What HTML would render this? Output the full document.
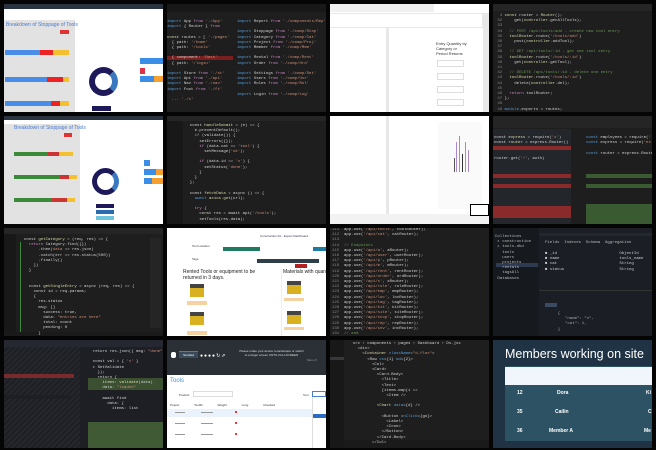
<!DOCTYPE html>
<html><head><meta charset="utf-8"><style>
*{margin:0;padding:0;box-sizing:border-box}
body{width:656px;height:450px;background:#050505;position:relative;overflow:hidden;font-family:"Liberation Sans",sans-serif}
.t{position:absolute;width:159px;height:108px;overflow:hidden}
.a{position:absolute}
.code{font-family:"Liberation Mono",monospace;font-size:4px;line-height:5.2px;white-space:pre;color:#9cdcfe}
.k{color:#c586c0}.s{color:#ce9178}.f{color:#dcdcaa}.g{color:#6a9955}.w{color:#d4d4d4}.b{color:#569cd6}.n{color:#858585}
</style></head><body>

<!-- Tile 1 -->
<div class="t" style="left:4px;top:4px;background:#fff">
 <div class="a" style="left:0;top:0;width:159px;height:5px;background:#2a3440"></div>
 <div class="a" style="left:0;top:16px;width:71px;height:92px;background:#e2e2e2"></div>
 <div class="a" style="left:2px;top:18px;font-size:5px;color:#4a7bd1">Breakdown of Stoppage of Tools</div>
 <div class="a" style="left:56px;top:26px;width:9px;height:4px;background:#d33"></div>
 <div class="a" style="left:1px;top:46px;width:35px;height:5px;background:#4a8de8"></div><div class="a" style="left:36px;top:46px;width:13px;height:5px;background:#e22"></div><div class="a" style="left:49px;top:46px;width:16px;height:5px;background:#f5c030"></div>
 <div class="a" style="left:1px;top:73px;width:42px;height:5px;background:#4a8de8"></div><div class="a" style="left:43px;top:73px;width:16px;height:5px;background:#e22"></div><div class="a" style="left:59px;top:73px;width:6px;height:5px;background:#f5c030"></div>
 <div class="a" style="left:1px;top:97px;width:46px;height:5px;background:#4a8de8"></div><div class="a" style="left:47px;top:97px;width:9px;height:5px;background:#e22"></div><div class="a" style="left:56px;top:97px;width:9px;height:5px;background:#f5c030"></div>
 <div class="a" style="left:85px;top:63px;width:29px;height:29px;border-radius:50%;border:6px solid #1e1a5a;border-right-color:#3a79c0"></div>
 <div class="a" style="left:88px;top:102px;width:19px;height:5px;background:#1e1a5a"></div>
 <div class="a" style="left:136px;top:54px;width:23px;height:6px;background:#3a8ee8"></div>
 <div class="a" style="left:136px;top:64px;width:5px;height:6px;background:#d34"></div>
 <div class="a" style="left:136px;top:72px;width:23px;height:6px;background:#f5a030"></div><div class="a" style="left:136px;top:72px;width:14px;height:6px;background:#3a8ee8"></div>
</div>

<!-- Tile 2 -->
<div class="t" style="left:167px;top:4px;background:#1e1e1e">
 <div class="a" style="left:0;top:0;width:159px;height:8px;background:#181818"></div>
 <div class="a" style="left:0;top:52px;width:66px;height:4px;background:#7a1f1f"></div>
 <div class="a code" style="left:0;top:16px"><span class="b">import</span> <span class="w">App</span> <span class="k">from</span> <span class="s">'./App'</span>
<span class="b">import</span> <span class="w">{ Router }</span> <span class="k">from</span>

<span class="f">const</span> <span class="w">routes = [</span> <span class="s">'./pages'</span>
<span class="w">  { path:</span> <span class="s">'/home'</span>
<span class="w">  { path:</span> <span class="s">'/tools'</span>

<span class="w">  { component:</span> <span class="s">'Dash'</span>
<span class="w">  { path:</span> <span class="s">'/login'</span>

<span class="b">import</span> <span class="w">Store</span> <span class="k">from</span> <span class="s">'./st'</span>
<span class="b">import</span> <span class="w">Api</span> <span class="k">from</span> <span class="s">'./api'</span>
<span class="b">import</span> <span class="w">Nav</span> <span class="k">from</span> <span class="s">'./nav'</span>
<span class="b">import</span> <span class="w">Foot</span> <span class="k">from</span> <span class="s">'./ft'</span>

<span class="w">  ...</span> <span class="s">'./x'</span></div>
 <div class="a code" style="left:70px;top:16px"><span class="b">import</span> <span class="w">Report</span> <span class="k">from</span> <span class="s">'./components/Rep'</span>

<span class="b">import</span> <span class="w">Stoppage</span> <span class="k">from</span> <span class="s">'./comp/Stop'</span>
<span class="b">import</span> <span class="w">Category</span> <span class="k">from</span> <span class="s">'./comp/Cat'</span>
<span class="b">import</span> <span class="w">Project</span> <span class="k">from</span> <span class="s">'./comp/Proj'</span>
<span class="b">import</span> <span class="w">Member</span> <span class="k">from</span> <span class="s">'./comp/Mem'</span>

<span class="b">import</span> <span class="w">Rental</span> <span class="k">from</span> <span class="s">'./comp/Rent'</span>
<span class="b">import</span> <span class="w">Order</span> <span class="k">from</span> <span class="s">'./comp/Ord'</span>

<span class="b">import</span> <span class="w">Settings</span> <span class="k">from</span> <span class="s">'./comp/Set'</span>
<span class="b">import</span> <span class="w">Users</span> <span class="k">from</span> <span class="s">'./comp/Usr'</span>
<span class="b">import</span> <span class="w">Roles</span> <span class="k">from</span> <span class="s">'./comp/Rol'</span>

<span class="b">import</span> <span class="w">Login</span> <span class="k">from</span> <span class="s">'./comp/Log'</span></div>
</div>

<!-- Tile 3 -->
<div class="t" style="left:330px;top:4px;background:#fff">
 <div class="a" style="left:0;top:0;width:104px;height:8px;background:#f0f0f0"></div>
 <div class="a" style="left:0;top:9px;width:159px;height:15px;background:#e8e8e8"></div>
 <div class="a" style="left:0;top:10px;width:152px;height:13px;background:#fff"></div>
 <div class="a" style="left:56px;top:24px;width:3px;height:84px;background:#e8e8e8"></div>
 <div class="a" style="left:153px;top:24px;width:6px;height:84px;background:#e8e8e8"></div>
 <div class="a" style="left:106px;top:37px;font-size:4px;line-height:5px;width:32px;color:#333">Entry Quantity by Category or Period Returns</div>
 <div class="a" style="left:107px;top:56px;width:27px;height:7px;border:1px solid #ddd"></div>
 <div class="a" style="left:107px;top:69px;width:27px;height:7px;border:1px solid #ddd"></div>
 <div class="a" style="left:107px;top:82px;width:27px;height:7px;border:1px solid #ddd"></div>
 <div class="a" style="left:107px;top:95px;width:27px;height:7px;border:1px solid #ddd"></div>
</div>

<!-- Tile 4 -->
<div class="t" style="left:493px;top:4px;background:#1e1e1e">
 <div class="a" style="left:0;top:0;width:159px;height:7px;background:#252526"></div>
 <div class="a code" style="left:2px;top:10px"><span class="n">  4</span> <span class="f">const</span> <span class="w">router = </span><span class="f">Router</span><span class="w">();</span>
<span class="n"> 32</span>     <span class="w">get(</span><span class="f">controller</span><span class="w">.getAllTools);</span>
<span class="n"> 33</span>
<span class="n"> 34</span>   <span class="g">// POST /api/tools/add - create new tool entry</span>
<span class="n"> 35</span>   <span class="f">toolRouter</span><span class="w">.route(</span><span class="s">'/tools/add'</span><span class="w">)</span>
<span class="n"> 36</span>     <span class="w">post(</span><span class="f">controller</span><span class="w">.addTool);</span>
<span class="n"> 37</span>
<span class="n"> 38</span>   <span class="g">// GET /api/tools/:id - get one tool entry</span>
<span class="n"> 39</span>   <span class="f">toolRouter</span><span class="w">.route(</span><span class="s">'/tools/:id'</span><span class="w">)</span>
<span class="n"> 40</span>     <span class="w">get(</span><span class="f">controller</span><span class="w">.getTool);</span>
<span class="n"> 41</span>
<span class="n"> 42</span>   <span class="g">// DELETE /api/tools/:id - delete one entry</span>
<span class="n"> 43</span>   <span class="f">toolRouter</span><span class="w">.route(</span><span class="s">'/tools/:id'</span><span class="w">)</span>
<span class="n"> 44</span>     <span class="w">delete(</span><span class="f">controller</span><span class="w">.del);</span>
<span class="n"> 45</span>
<span class="n"> 46</span>   <span class="k">return</span> <span class="w">toolRouter;</span>
<span class="n"> 47</span> <span class="w">};</span>
<span class="n"> 48</span>
<span class="n"> 49</span> <span class="b">module</span><span class="w">.exports = routes;</span></div>
</div>

<!-- Tile 5 -->
<div class="t" style="left:4px;top:116px;background:#fff">
 <div class="a" style="left:0;top:0;width:159px;height:4px;background:#2a3440"></div>
 <div class="a" style="left:0;top:8px;width:76px;height:100px;background:#e2e2e2"></div>
 <div class="a" style="left:10px;top:9px;font-size:5px;color:#4a7bd1">Breakdown of Stoppage of Tools</div>
 <div class="a" style="left:60px;top:17px;width:8px;height:4px;background:#d33"></div>
 <div class="a" style="left:10px;top:36px;width:34px;height:4px;background:#3a8a3a"></div><div class="a" style="left:44px;top:36px;width:11px;height:4px;background:#c33"></div><div class="a" style="left:55px;top:36px;width:14px;height:4px;background:#f5c030"></div>
 <div class="a" style="left:10px;top:59px;width:46px;height:4px;background:#3a8a3a"></div><div class="a" style="left:56px;top:59px;width:9px;height:4px;background:#c33"></div><div class="a" style="left:65px;top:59px;width:8px;height:4px;background:#f5c030"></div>
 <div class="a" style="left:10px;top:82px;width:38px;height:4px;background:#3a8a3a"></div><div class="a" style="left:48px;top:82px;width:15px;height:4px;background:#c33"></div><div class="a" style="left:63px;top:82px;width:8px;height:4px;background:#f5c030"></div>
 <div class="a" style="left:88px;top:52px;width:27px;height:27px;border-radius:50%;border:5px solid #1e1a5a;border-right-color:#3a79c0"></div>
 <div class="a" style="left:92px;top:88px;width:18px;height:4px;background:#1e1a5a"></div>
 <div class="a" style="left:92px;top:94px;width:18px;height:4px;background:#2a6cb0"></div>
 <div class="a" style="left:92px;top:100px;width:18px;height:4px;background:#6cc5dd"></div>
 <div class="a" style="left:140px;top:44px;width:6px;height:6px;background:#3a8ee8"></div>
 <div class="a" style="left:140px;top:53px;width:19px;height:6px;background:#f5a030"></div><div class="a" style="left:140px;top:53px;width:12px;height:6px;background:#3a8ee8"></div>
 <div class="a" style="left:140px;top:62px;width:19px;height:6px;background:#f5a030"></div><div class="a" style="left:140px;top:62px;width:8px;height:6px;background:#3a8ee8"></div>
</div>

<!-- Tile 6 -->
<div class="t" style="left:167px;top:116px;background:#1e1e1e">
 <div class="a" style="left:0;top:0;width:159px;height:5px;background:#252526"></div>
 <div class="a" style="left:0;top:5px;width:16px;height:103px;background:#181818"></div>
 <div class="a code" style="left:18px;top:8px"><span class="w">  const</span> <span class="f">handleSubmit</span> <span class="w">= (e) => {</span>
<span class="w">    e.preventDefault();</span>
<span class="k">    if</span> <span class="w">(validate()) {</span>
<span class="w">      setErrors({});</span>
<span class="k">      if</span> <span class="w">(data.cat ==</span> <span class="s">'tool'</span><span class="w">) {</span>
<span class="w">        setMessage(</span><span class="s">'ok'</span><span class="w">);</span>

<span class="k">      if</span> <span class="w">(data.id ==</span> <span class="s">'x'</span><span class="w">) {</span>
<span class="w">        setStatus(</span><span class="s">'done'</span><span class="w">);</span>
<span class="w">      }</span>
<span class="w">    }</span>
<span class="w">  };</span>

<span class="w">  const</span> <span class="f">fetchData</span> <span class="w">= async () => {</span>
<span class="w">    </span><span class="b">await</span> <span class="f">axios.get</span><span class="w">(url);</span>

<span class="w">    </span><span class="k">try</span> <span class="w">{</span>
<span class="w">      const res = await api(</span><span class="s">'/tools'</span><span class="w">);</span>
<span class="w">      setTools(res.data);</span>

<span class="w">    } </span><span class="k">catch</span><span class="w"> {</span>
<span class="w">    }</span>
<span class="w">  };</span></div>
</div>

<!-- Tile 7 -->
<div class="t" style="left:330px;top:116px;background:#fff">
 <div class="a" style="left:56px;top:0;width:3px;height:108px;background:#e8e8e8"></div>
 <div class="a" style="left:0;top:98px;width:159px;height:10px;background:#f2f2f2"></div>
 <div class="a" style="left:108px;top:6px;width:44px;height:87px;background:#fafafa"></div>
 <div class="a" style="left:124px;top:42px;width:1px;height:14px;background:#555"></div>
 <div class="a" style="left:126px;top:26px;width:1px;height:30px;background:#aa88cc"></div>
 <div class="a" style="left:129px;top:20px;width:1px;height:36px;background:#aa88cc"></div>
 <div class="a" style="left:132px;top:38px;width:1px;height:18px;background:#333"></div>
 <div class="a" style="left:135px;top:26px;width:1px;height:30px;background:#aa88cc"></div>
 <div class="a" style="left:138px;top:34px;width:1px;height:22px;background:#aa88cc"></div>
 <div class="a" style="left:140px;top:88px;width:19px;height:12px;border:1px solid #000;background:#fff"></div>
</div>

<!-- Tile 8 -->
<div class="t" style="left:493px;top:116px;background:#1e1e1e">
 <div class="a" style="left:0;top:0;width:159px;height:12px;background:#252526"></div>
 <div class="a" style="left:0;top:13px;width:78px;height:95px;background:#23262b"></div>
 <div class="a" style="left:0;top:30px;width:78px;height:4px;background:#8a2a2a"></div>
 <div class="a" style="left:0;top:58px;width:78px;height:4px;background:#8a2a2a"></div>
 <div class="a" style="left:0;top:68px;width:78px;height:4px;background:#8a2a2a"></div>
 <div class="a" style="left:0;top:90px;width:78px;height:12px;background:#8a2a2a"></div>
 <div class="a" style="left:93px;top:58px;width:66px;height:4px;background:#3a5a32"></div>
 <div class="a" style="left:93px;top:68px;width:66px;height:4px;background:#3a5a32"></div>
 <div class="a" style="left:93px;top:88px;width:66px;height:20px;background:#3a5a32"></div>
 <div class="a code" style="left:1px;top:20px"><span class="w">const</span> <span class="f">express</span> <span class="w">= require(</span><span class="s">'x'</span><span class="w">)</span>
<span class="w">const</span> <span class="f">router</span> <span class="w">= express.Router()</span>


<span class="w">router.get(</span><span class="s">'/'</span><span class="w">, auth)</span></div>
 <div class="a code" style="left:93px;top:20px"><span class="b">const</span> <span class="w">employees = require(</span><span class="s">'./e'</span><span class="w">)</span>
<span class="b">const</span> <span class="w">express = require(</span><span class="s">'ex'</span><span class="w">)</span>

<span class="b">const</span> <span class="w">router = express.Router()</span></div>
</div>

<!-- Tile 9 -->
<div class="t" style="left:4px;top:228px;background:#1e1e1e">
 <div class="a" style="left:0;top:0;width:159px;height:6px;background:#252526"></div>
 <div class="a" style="left:0;top:6px;width:12px;height:102px;background:#181818"></div>
 <div class="a" style="left:16px;top:14px;width:1px;height:90px;background:#3a8a3a"></div>
 <div class="a" style="left:146px;top:10px;width:11px;height:90px;background:#252526"></div>
 <div class="a" style="left:0;top:104px;width:159px;height:4px;background:#1a1a1a"></div>
 <div class="a code" style="left:20px;top:10px"><span class="w">const</span> <span class="f">getCategory</span> <span class="w">= (req, res) => {</span>
<span class="k">  return</span> <span class="w">Category.find({})</span>
<span class="w">      .then(</span><span class="s">data</span><span class="w"> => res.json)</span>
<span class="w">      .catch(err => res.status(500))</span>
<span class="w">      .finally()</span>
<span class="w">    })</span>
<span class="w">  }</span>


<span class="w">  const</span> <span class="f">getSingleEntry</span> <span class="w">= async (req, res) => {</span>
<span class="w">    const id = req.params;</span>
<span class="w">    {</span>
<span class="w">      res.status</span>
<span class="w">      msg: []</span>
<span class="w">        success: true,</span>
<span class="w">        data:</span> <span class="s">"entries are here"</span>
<span class="w">        total: count</span>
<span class="w">        pending: 0</span>
<span class="w">      }</span>

<span class="w">    }) .</span><span class="f">catch</span><span class="w">(err)</span></div>
</div>

<!-- Tile 10 -->
<div class="t" style="left:167px;top:228px;background:#fff">
 <div class="a" style="left:93px;top:6px;font-size:3px;color:#335">Construction Kit - Expert Dashboard</div>
 <div class="a" style="left:25px;top:16px;font-size:3px;color:#333">Tool Location</div>
 <div class="a" style="left:56px;top:19px;width:37px;height:4px;background:#1f7a5e"></div>
 <div class="a" style="left:146px;top:19px;width:13px;height:4px;background:#1f7aa0"></div>
 <div class="a" style="left:25px;top:29px;font-size:3px;color:#333">Tags</div>
 <div class="a" style="left:90px;top:31px;width:62px;height:4px;background:#2e3f4a"></div>
 <div class="a" style="left:128px;top:36px;width:12px;height:4px;background:#b52020"></div>
 <div class="a" style="left:16px;top:41px;font-size:5px;line-height:6px;width:90px;color:#222">Rented Tools or equipment to be returned in 3 days.</div>
 <div class="a" style="left:114px;top:41px;width:1px;height:67px;background:#eee"></div>
 <div class="a" style="left:116px;top:41px;font-size:5px;color:#222;white-space:nowrap">Materials with quantity le</div>
 <div class="a" style="left:23px;top:56px;width:14px;height:13px;background:#d8b020;border-top:4px solid #444"></div>
 <div class="a" style="left:20px;top:73px;width:20px;height:4px;background:#f5d2a0"></div>
 <div class="a" style="left:23px;top:84px;width:14px;height:13px;background:#d8b020;border-top:4px solid #444"></div>
 <div class="a" style="left:20px;top:103px;width:20px;height:4px;background:#f5d2a0"></div>
 <div class="a" style="left:120px;top:53px;width:14px;height:13px;background:#d8b020;border-top:4px solid #444"></div>
 <div class="a" style="left:117px;top:70px;width:20px;height:3px;background:#f5d2a0"></div>
 <div class="a" style="left:120px;top:83px;width:14px;height:13px;background:#d8b020;border-top:4px solid #444"></div>
 <div class="a" style="left:117px;top:99px;width:20px;height:3px;background:#f5d2a0"></div>
</div>

<!-- Tile 11 -->
<div class="t" style="left:330px;top:228px;background:#1e1e1e">
 <div class="a code" style="left:2px;top:0"><span class="n">111</span>  <span class="w">app.use(</span><span class="s">'/api/tools'</span><span class="w">, toolRouter);</span>
<span class="n">112</span>  <span class="w">app.use(</span><span class="s">'/api/cat'</span><span class="w">, catRouter);</span>
<span class="n">113</span>
<span class="n">114</span>  <span class="g">// Endpoints</span>
<span class="n">115</span>  <span class="w">app.use(</span><span class="s">'/api/a'</span><span class="w">, aRouter);</span>
<span class="n">116</span>  <span class="w">app.use(</span><span class="s">'/api/user'</span><span class="w">, userRouter);</span>
<span class="n">117</span>  <span class="w">app.use(</span><span class="s">'/api/p'</span><span class="w">, pRouter);</span>
<span class="n">118</span>  <span class="w">app.use(</span><span class="s">'/api/m'</span><span class="w">, mRouter);</span>
<span class="n">119</span>  <span class="w">app.use(</span><span class="s">'/api/rent'</span><span class="w">, rentRouter);</span>
<span class="n">120</span>  <span class="w">app.use(</span><span class="s">'/api/order'</span><span class="w">, ordRouter);</span>
<span class="n">121</span>  <span class="w">app.use(</span><span class="s">'/api/s'</span><span class="w">, sRouter);</span>
<span class="n">122</span>  <span class="w">app.use(</span><span class="s">'/api/role'</span><span class="w">, roleRouter);</span>
<span class="n">123</span>  <span class="w">app.use(</span><span class="s">'/api/emp'</span><span class="w">, empRouter);</span>
<span class="n">124</span>  <span class="w">app.use(</span><span class="s">'/api/loc'</span><span class="w">, locRouter);</span>
<span class="n">125</span>  <span class="w">app.use(</span><span class="s">'/api/tag'</span><span class="w">, tagRouter);</span>
<span class="n">126</span>  <span class="w">app.use(</span><span class="s">'/api/kit'</span><span class="w">, kitRouter);</span>
<span class="n">127</span>  <span class="w">app.use(</span><span class="s">'/api/site'</span><span class="w">, siteRouter);</span>
<span class="n">128</span>  <span class="w">app.use(</span><span class="s">'/api/stop'</span><span class="w">, stopRouter);</span>
<span class="n">129</span>  <span class="w">app.use(</span><span class="s">'/api/rep'</span><span class="w">, repRouter);</span>
<span class="n">130</span>  <span class="w">app.use(</span><span class="s">'/api/inv'</span><span class="w">, invRouter);</span>
<span class="n">131</span>  <span class="g">// end</span></div>
</div>

<!-- Tile 12 -->
<div class="t" style="left:493px;top:228px;background:#1b1e24">
 <div class="a" style="left:0;top:0;width:46px;height:108px;background:#16191e"></div>
 <div class="a" style="left:3px;top:35px;width:42px;height:4px;background:#2e3b50"></div>
 <div class="a code" style="left:2px;top:7px;color:#bbb">Collections
 ▸ construction
 ▸ tools-dbd
   tools
   users
   projects
   rentals
   tagsAll
 Databases</div>
 <div class="a" style="left:46px;top:5px;width:113px;height:3px;background:#23272e"></div>
 <div class="a code" style="left:52px;top:13px;color:#bbb">Fields  Indexes  Schema  Aggregation</div>
 <div class="a code" style="left:52px;top:24px;color:#ccc">■ _id                          ObjectId
■ name                         tools_name
■ cat                          String
■ status                       String</div>
 <div class="a" style="left:46px;top:62px;width:113px;height:1px;background:#333"></div>
 <div class="a" style="left:52px;top:75px;width:12px;height:4px;background:#3a4a60"></div>
 <div class="a code" style="left:60px;top:84px;color:#aaa">  {
     "name": "x",
     "cat": 1,
  }</div>
</div>

<!-- Tile 13 -->
<div class="t" style="left:4px;top:340px;background:#1e1f24">
 <div class="a" style="left:0;top:0;width:159px;height:7px;background:#252830"></div>
 <div class="a" style="left:0;top:7px;width:76px;height:101px;background:repeating-linear-gradient(135deg,#25272d 0 2px,#1e1f24 2px 4px)"></div>
 <div class="a" style="left:0;top:34px;width:70px;height:4px;background:#7a2a2a"></div>
 <div class="a" style="left:0;top:55px;width:66px;height:4px;background:#1e1f24"></div>
 <div class="a" style="left:84px;top:38px;width:75px;height:12px;background:#3a5030"></div>
 <div class="a" style="left:84px;top:82px;width:75px;height:26px;background:#3f5a35"></div>
 <div class="a code" style="left:84px;top:10px"><span class="w">  return res.json({ msg:</span> <span class="s">"done"</span><span class="w"> })</span>

<span class="w">  const val = {</span> <span class="s">'x'</span><span class="w"> }</span>
<span class="w">  ▸ SetValidate</span>
<span class="w">    });</span>
<span class="w">    return {</span>
<span class="w">      items: </span><span class="f">validate</span><span class="w">(data)</span>
<span class="w">      data:</span> <span class="s">"loaded"</span>

<span class="w">      await find</span>
<span class="w">        data: {</span>
<span class="w">          items: list</span></div>
</div>

<!-- Tile 14 -->
<div class="t" style="left:167px;top:340px;background:#fff">
 <div class="a" style="left:0;top:0;width:159px;height:35px;background:#2b3036"></div>
 <div class="a" style="left:4px;top:12px;width:5px;height:6px;background:#fff;border-radius:2px"></div>
 <div class="a" style="left:12px;top:11px;width:19px;height:7px;background:#3a4a5a;border-top:1px solid #2a9a6a;font-size:3px;color:#fff;text-align:center;line-height:6px">Scrolled</div>
 <div class="a" style="left:33px;top:13px;font-size:5px;color:#fff;letter-spacing:1px">●●●●↻⇗</div>
 <div class="a" style="left:72px;top:9px;width:65px;font-size:3px;line-height:4px;color:#ddd;text-align:center">Please rotate your device to landscape or switch to a larger screen UNTIL FULLSCREEN</div>
 <div class="a" style="left:140px;top:18px;font-size:3px;color:#999">Menu ▾</div>
 <div class="a" style="left:3px;top:38px;font-size:6px;color:#4a90d0">Tools</div>
 <div class="a" style="left:12px;top:53px;font-size:3px;color:#333">Product</div>
 <div class="a" style="left:26px;top:51px;width:40px;height:6px;border:1px solid #ddd"></div>
 <div class="a" style="left:136px;top:53px;font-size:3px;color:#333">Tool</div>
 <div class="a" style="left:145px;top:51px;width:14px;height:6px;border:1px solid #4a80d0"></div>
 <div class="a" style="left:3px;top:63px;width:140px;height:4px;font-size:3px;color:#333;word-spacing:14px">Project ToolID Weight Long Checked</div>
 <div class="a" style="left:0;top:69px;width:145px;height:8px;background:#eaf3fb"></div>
 <div class="a" style="left:8px;top:72px;width:10px;height:1px;background:#999"></div>
 <div class="a" style="left:8px;top:83px;width:10px;height:1px;background:#999"></div>
 <div class="a" style="left:8px;top:94px;width:10px;height:1px;background:#999"></div>
 <div class="a" style="left:34px;top:72px;width:12px;height:1px;background:#999"></div>
 <div class="a" style="left:34px;top:83px;width:12px;height:1px;background:#999"></div>
 <div class="a" style="left:34px;top:94px;width:12px;height:1px;background:#999"></div>
 <div class="a" style="left:68px;top:71px;width:2px;height:2px;background:#e33"></div>
 <div class="a" style="left:68px;top:82px;width:2px;height:2px;background:#e33"></div>
 <div class="a" style="left:68px;top:93px;width:2px;height:2px;background:#e33"></div>
 <div class="a" style="left:145px;top:57px;width:14px;height:51px;background:#fff;border-left:1px solid #ddd"></div>
 <div class="a" style="left:146px;top:74px;width:13px;height:4px;background:#2a6cc0"></div>
</div>

<!-- Tile 15 -->
<div class="t" style="left:330px;top:340px;background:#1e1e1e">
 <div class="a" style="left:0;top:0;width:14px;height:108px;background:#181818"></div>
 <div class="a" style="left:0;top:17px;width:14px;height:3px;background:#37373d"></div>
 <div class="a" style="left:14px;top:100px;width:145px;height:8px;background:#1a1a1a"></div>
 <div class="a code" style="left:18px;top:2px"><span class="w">  src › components › pages › Dashboard › Ds.jsx</span>
<span class="w">    &lt;div&gt;</span>
<span class="f">      &lt;Container</span> <span class="b">className</span><span class="w">=</span><span class="s">"d-flex"</span><span class="w">&gt;</span>
<span class="w">        &lt;Row</span> <span class="b">xs</span><span class="w">={1}</span> <span class="b">md</span><span class="w">={2}</span><span class="w">&gt;</span>
<span class="w">          &lt;Col&gt;</span>
<span class="w">          &lt;Card&gt;</span>
<span class="w">            &lt;Card.Body&gt;</span>
<span class="w">              &lt;Title&gt;</span>
<span class="w">              &lt;Text&gt;</span>
<span class="w">              {items.map(i =&gt;</span>
<span class="w">                &lt;Item /&gt;</span>

<span class="f">            &lt;Chart</span> <span class="b">data</span><span class="w">={d} /&gt;</span>

<span class="w">              &lt;Button</span> <span class="b">onClick</span><span class="w">={go}&gt;</span>
<span class="w">                &lt;Label&gt;</span>
<span class="w">                &lt;Icon&gt;</span>
<span class="w">              &lt;/Button&gt;</span>
<span class="w">            &lt;/Card.Body&gt;</span>
<span class="w">          &lt;/Col&gt;</span></div>
</div>

<!-- Tile 16 -->
<div class="t" style="left:493px;top:340px;background:#1f3344">
 <div class="a" style="left:12px;top:6px;width:147px;height:101px;background:#2c5264"></div>
 <div class="a" style="left:12px;top:6px;width:147px;height:20px;background:#1f3344"></div>
 <div class="a" style="left:12px;top:6px;font-size:12.5px;color:#fff;white-space:nowrap;line-height:16px">Members working on site</div>
 <div class="a" style="left:12px;top:27px;width:147px;height:18px;background:#f0f6fb"></div>
 <div class="a" style="left:0;top:101px;width:159px;height:7px;background:#1f3344"></div>
 <div class="a" style="left:24px;top:50px;font-size:5px;font-weight:bold;color:#fff">12</div>
 <div class="a" style="left:64px;top:50px;font-size:5px;font-weight:bold;color:#fff">Dora</div>
 <div class="a" style="left:153px;top:50px;font-size:5px;font-weight:bold;color:#fff">Ki</div>
 <div class="a" style="left:24px;top:69px;font-size:5px;font-weight:bold;color:#fff">35</div>
 <div class="a" style="left:62px;top:69px;font-size:5px;font-weight:bold;color:#fff">Cailin</div>
 <div class="a" style="left:155px;top:69px;font-size:5px;font-weight:bold;color:#fff">C</div>
 <div class="a" style="left:24px;top:88px;font-size:5px;font-weight:bold;color:#fff">36</div>
 <div class="a" style="left:56px;top:88px;font-size:5px;font-weight:bold;color:#fff">Member A</div>
 <div class="a" style="left:151px;top:88px;font-size:5px;font-weight:bold;color:#fff">Me</div>
</div>

</body></html>
